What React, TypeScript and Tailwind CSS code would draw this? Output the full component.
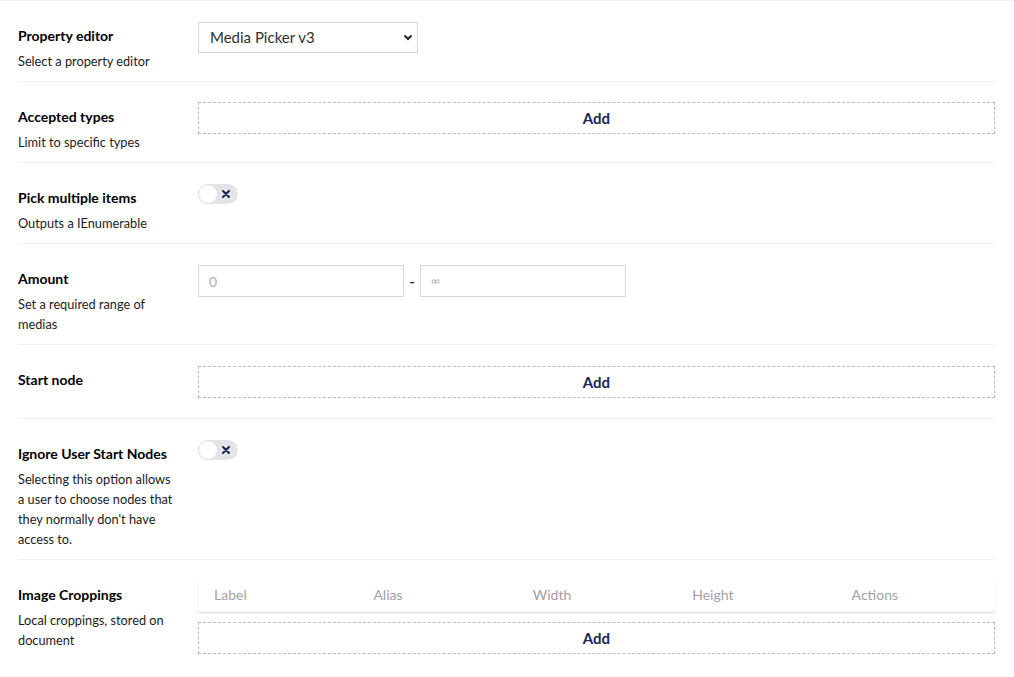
import { ReactNode } from 'react';

function Row({ label, desc, children }: { label: string; desc?: ReactNode; children: ReactNode }) {
  return (
    <div className="flex border-b border-[#f0f0f0] pt-[20px] pb-[10px] last:border-b-0">
      <div className="w-[160px] shrink-0">
        <div className="pt-[5px] text-[14px] font-bold leading-[20px] text-[#000]">{label}</div>
        {desc && <div className="mt-[5px] text-[12.75px] leading-[20px] text-[#1b1b1b]">{desc}</div>}
      </div>
      <div className="ml-[20px] flex-1 pb-[10px]">{children}</div>
    </div>
  );
}

function AddBox() {
  return (
    <button className="flex h-[32px] w-full items-center justify-center border border-dashed border-[#bbbabf] text-[15px] font-bold text-[#1b264f]">
      Add
    </button>
  );
}

function Toggle() {
  return (
    <div className="relative mt-[1px] h-[20px] w-[40px] rounded-full bg-[#e4e4e6]">
      <div className="absolute left-0 top-0 h-[20px] w-[20px] rounded-full border border-[#e0e0e3] bg-white" />
      <svg className="absolute left-[24px] top-[6px] h-[8px] w-[8px]" viewBox="0 0 8 8">
        <path d="M1 1 7 7M7 1 1 7" stroke="#1b264f" strokeWidth={2} strokeLinecap="round" />
      </svg>
    </div>
  );
}

export default function App() {
  return (
    <div className="min-h-[677px] bg-white font-['Lato',sans-serif]">
      <div className="border-t border-[#f0f0f0] pl-[18px] pr-[19px]">
        <Row label="Property editor" desc="Select a property editor">
          <div className="relative mt-[1px] w-[220px]">
            <div className="flex h-[31px] items-center border border-[#d8d7d9] px-[11px] text-[15px] text-[#303033]">
              Media Picker v3
            </div>
            <svg className="absolute right-[5px] top-[12px] h-[7px] w-[10px]" viewBox="0 0 10 7">
              <path d="M1.5 1.5 5 5 8.5 1.5" fill="none" stroke="#222" strokeWidth={2} />
            </svg>
          </div>
        </Row>
        <Row label="Accepted types" desc="Limit to specific types">
          <AddBox />
        </Row>
        <Row label="Pick multiple items" desc="Outputs a IEnumerable">
          <Toggle />
        </Row>
        <Row label="Amount" desc={<>Set a required range of<br />medias</>}>
          <div className="flex items-center pt-[1px]">
            <div className="flex h-[32px] w-[206px] items-center border border-[#d8d7d9] px-[10px] text-[14px] text-[#b0b0b0]">0</div>
            <span className="w-[16px] text-center text-[14px] font-bold text-[#1b1b1b]">-</span>
            <div className="flex h-[32px] w-[206px] items-center border border-[#d8d7d9] px-[10px] text-[12px] text-[#b0b0b0]">∞</div>
          </div>
        </Row>
        <Row label="Start node">
          <div className="pt-[1px]">
            <AddBox />
          </div>
        </Row>
        <Row
          label="Ignore User Start Nodes"
          desc={<>Selecting this option allows<br />a user to choose nodes that<br />they normally don't have<br />access to.</>}
        >
          <Toggle />
        </Row>
        <Row label="Image Croppings" desc={<>Local croppings, stored on<br />document</>}>
          <div>
            <div className="grid h-[32px] grid-cols-5 items-center rounded-[3px] bg-white pb-[3px] text-[14px] text-[#a2a1a6] shadow-[0_1px_2px_rgba(0,0,0,0.16)]">
              <span className="pl-[16px]">Label</span>
              <span className="pl-[16px]">Alias</span>
              <span className="pl-[16px]">Width</span>
              <span className="pl-[16px]">Height</span>
              <span className="pl-[16px]">Actions</span>
            </div>
            <div className="mt-[10px]">
              <AddBox />
            </div>
          </div>
        </Row>
      </div>
    </div>
  );
}
